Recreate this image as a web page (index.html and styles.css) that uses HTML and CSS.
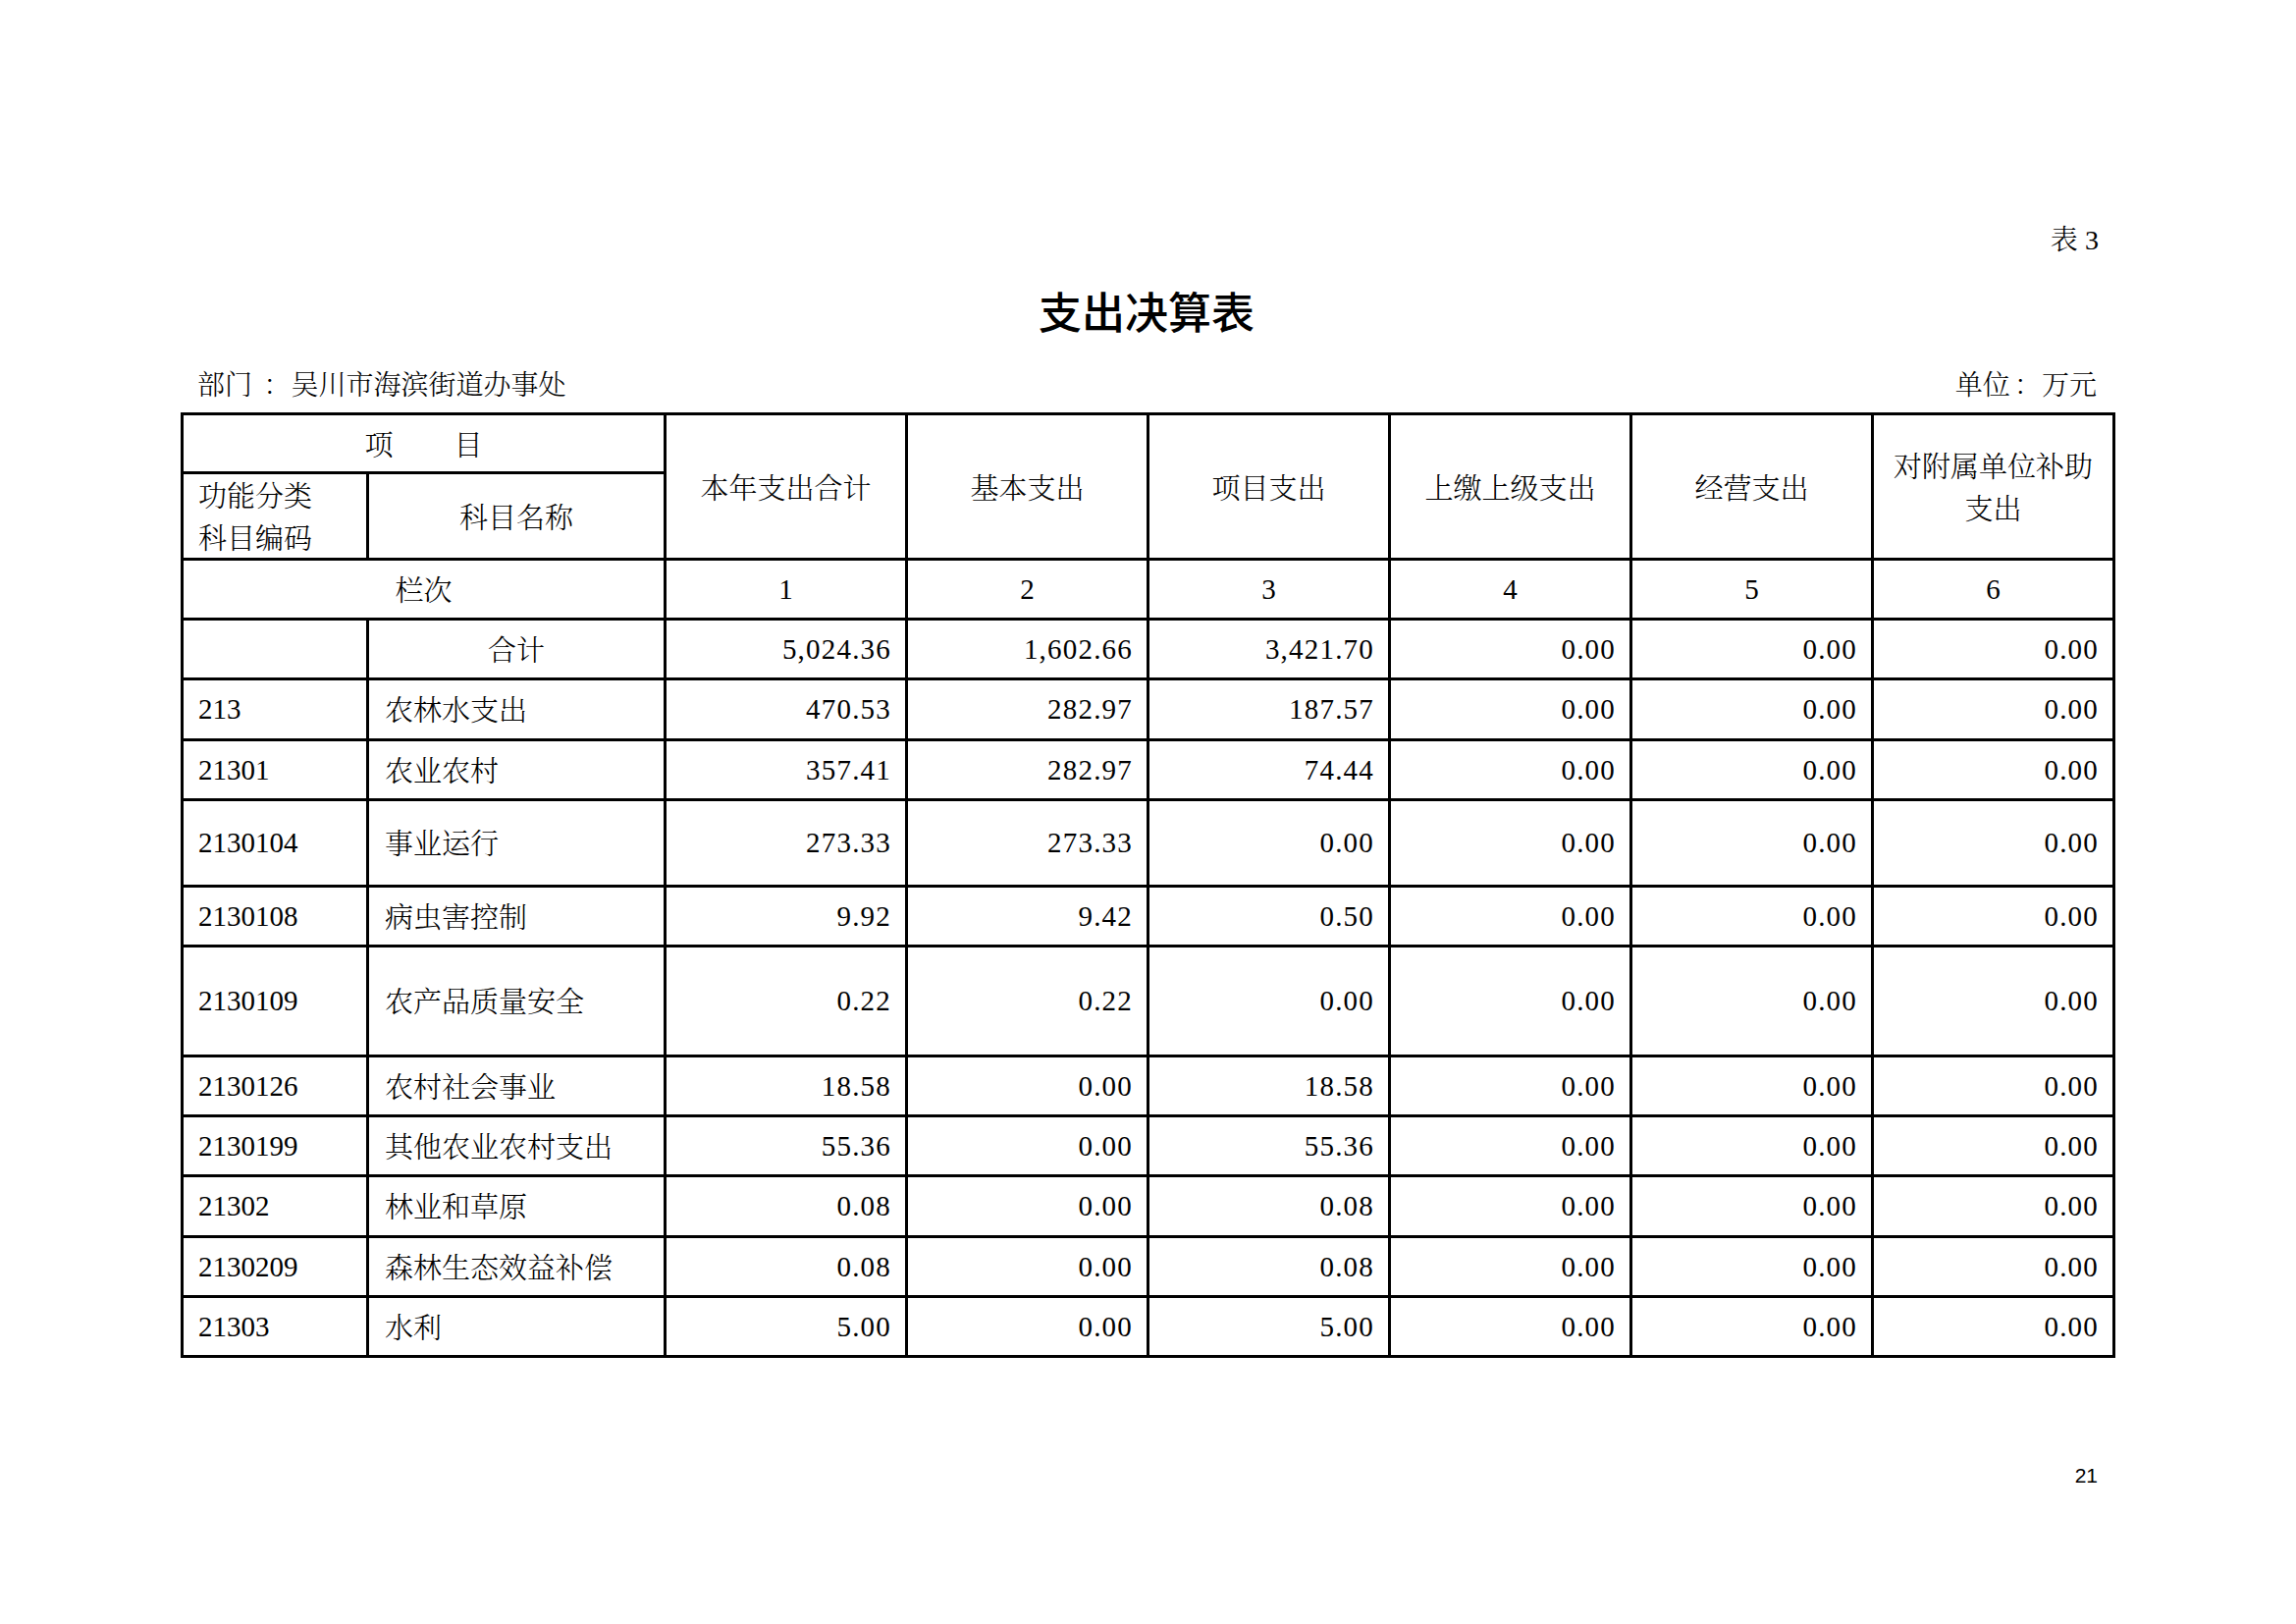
FILE: index.html
```html
<!DOCTYPE html>
<html lang="zh-CN">
<head>
<meta charset="utf-8">
<title>支出决算表</title>
<link rel="stylesheet" href="styles.css">
</head>
<body>
<div class="page">
  <div class="sheet">
    <div class="tag">表 <span class="latin">3</span></div>
    <h1 class="title">支出决算表</h1>
    <div class="meta">
      <span>部门 <span class="colon">：</span>吴川市海滨街道办事处</span>
      <span>单位<span class="colon">：</span>万元</span>
    </div>
    <table class="grid">
      <colgroup>
        <col class="w-code">
        <col class="w-name">
        <col class="w-val">
        <col class="w-val">
        <col class="w-val">
        <col class="w-val">
        <col class="w-val">
        <col class="w-val">
      </colgroup>
      <tr class="h-top">
        <td colspan="2" class="c">项<span class="gap"></span>目</td>
        <td rowspan="2" class="c">本年支出合计</td>
        <td rowspan="2" class="c">基本支出</td>
        <td rowspan="2" class="c">项目支出</td>
        <td rowspan="2" class="c">上缴上级支出</td>
        <td rowspan="2" class="c">经营支出</td>
        <td rowspan="2" class="c two">对附属单位补助<br>支出</td>
      </tr>
      <tr class="h-sub">
        <td class="code two">功能分类<br>科目编码</td>
        <td class="c">科目名称</td>
      </tr>
      <tr class="h-row">
        <td colspan="2" class="c">栏次</td>
        <td class="c latin">1</td>
        <td class="c latin">2</td>
        <td class="c latin">3</td>
        <td class="c latin">4</td>
        <td class="c latin">5</td>
        <td class="c latin">6</td>
      </tr>
      <tr class="h-row">
        <td class="code"></td>
        <td class="c">合计</td>
        <td class="num">5,024.36</td>
        <td class="num">1,602.66</td>
        <td class="num">3,421.70</td>
        <td class="num">0.00</td>
        <td class="num">0.00</td>
        <td class="num">0.00</td>
      </tr>
      <tr class="h-row">
        <td class="code latin">213</td>
        <td class="name">农林水支出</td>
        <td class="num">470.53</td>
        <td class="num">282.97</td>
        <td class="num">187.57</td>
        <td class="num">0.00</td>
        <td class="num">0.00</td>
        <td class="num">0.00</td>
      </tr>
      <tr class="h-row">
        <td class="code latin">21301</td>
        <td class="name">农业农村</td>
        <td class="num">357.41</td>
        <td class="num">282.97</td>
        <td class="num">74.44</td>
        <td class="num">0.00</td>
        <td class="num">0.00</td>
        <td class="num">0.00</td>
      </tr>
      <tr class="h-mid">
        <td class="code latin">2130104</td>
        <td class="name">事业运行</td>
        <td class="num">273.33</td>
        <td class="num">273.33</td>
        <td class="num">0.00</td>
        <td class="num">0.00</td>
        <td class="num">0.00</td>
        <td class="num">0.00</td>
      </tr>
      <tr class="h-row">
        <td class="code latin">2130108</td>
        <td class="name">病虫害控制</td>
        <td class="num">9.92</td>
        <td class="num">9.42</td>
        <td class="num">0.50</td>
        <td class="num">0.00</td>
        <td class="num">0.00</td>
        <td class="num">0.00</td>
      </tr>
      <tr class="h-tall">
        <td class="code latin">2130109</td>
        <td class="name">农产品质量安全</td>
        <td class="num">0.22</td>
        <td class="num">0.22</td>
        <td class="num">0.00</td>
        <td class="num">0.00</td>
        <td class="num">0.00</td>
        <td class="num">0.00</td>
      </tr>
      <tr class="h-row">
        <td class="code latin">2130126</td>
        <td class="name">农村社会事业</td>
        <td class="num">18.58</td>
        <td class="num">0.00</td>
        <td class="num">18.58</td>
        <td class="num">0.00</td>
        <td class="num">0.00</td>
        <td class="num">0.00</td>
      </tr>
      <tr class="h-row">
        <td class="code latin">2130199</td>
        <td class="name">其他农业农村支出</td>
        <td class="num">55.36</td>
        <td class="num">0.00</td>
        <td class="num">55.36</td>
        <td class="num">0.00</td>
        <td class="num">0.00</td>
        <td class="num">0.00</td>
      </tr>
      <tr class="h-row">
        <td class="code latin">21302</td>
        <td class="name">林业和草原</td>
        <td class="num">0.08</td>
        <td class="num">0.00</td>
        <td class="num">0.08</td>
        <td class="num">0.00</td>
        <td class="num">0.00</td>
        <td class="num">0.00</td>
      </tr>
      <tr class="h-row">
        <td class="code latin">2130209</td>
        <td class="name">森林生态效益补偿</td>
        <td class="num">0.08</td>
        <td class="num">0.00</td>
        <td class="num">0.08</td>
        <td class="num">0.00</td>
        <td class="num">0.00</td>
        <td class="num">0.00</td>
      </tr>
      <tr class="h-row">
        <td class="code latin">21303</td>
        <td class="name">水利</td>
        <td class="num">5.00</td>
        <td class="num">0.00</td>
        <td class="num">5.00</td>
        <td class="num">0.00</td>
        <td class="num">0.00</td>
        <td class="num">0.00</td>
      </tr>
    </table>
  </div>
  <div class="pageno">21</div>
</div>
</body>
</html>
```

FILE: styles.css
```css
html, body {
  margin: 0;
  padding: 0;
  background: #ffffff;
}

body {
  color: #000000;
  font-family: "Noto Serif CJK SC", "Noto Sans CJK SC", serif;
  font-weight: 300;
}

.page {
  width: 2339px;
  height: 1654px;
  box-sizing: border-box;
  padding-top: 222px;
}

.sheet {
  width: 1968px;
  margin-left: 184px;
}

.latin {
  font-family: "Liberation Serif", "Noto Serif CJK SC", serif;
}

.colon {
  padding-left: 0.15em;
}

.tag {
  text-align: right;
  padding-right: 14px;
  font-size: 28px;
  line-height: 40px;
  height: 40px;
}

.title {
  margin: 24px 0 0;
  text-align: center;
  font-family: "Noto Sans CJK SC", sans-serif;
  font-size: 44px;
  line-height: 60px;
  font-weight: 500;
}

.meta {
  display: flex;
  justify-content: space-between;
  margin-top: 24px;
  padding: 0 16px 0 17px;
  font-size: 28px;
  line-height: 40px;
}

.grid {
  margin-top: 10px;
  width: 1968px;
  border-collapse: collapse;
  table-layout: fixed;
  font-size: 29px;
}

.w-code { width: 189px; }
.w-name { width: 303px; }
.w-val { width: 246px; }

.grid td {
  border: 3px solid #000000;
  padding: 0 14px;
  vertical-align: middle;
  line-height: 44px;
  white-space: nowrap;
}

.grid td.two {
  line-height: 42.5px;
}

.grid td.c {
  text-align: center;
}

.grid td.code {
  text-align: left;
  padding-left: 15px;
}

.grid td.name {
  text-align: left;
  padding-left: 16px;
}

.grid td.num {
  text-align: right;
  padding-right: 14px;
  font-family: "Liberation Serif", "Noto Serif CJK SC", serif;
  letter-spacing: 1.2px;
}

.gap {
  display: inline-block;
  width: 62px;
}

.h-top { height: 60px; }
.h-sub { height: 88px; }
.h-row { height: 61.2px; }
.h-mid { height: 88px; }
.h-tall { height: 112px; }

.pageno {
  width: 2137px;
  margin-top: 105px;
  text-align: right;
  font-family: "Liberation Sans", "Open Sans", sans-serif;
  font-weight: 400;
  font-size: 21px;
  line-height: 30px;
}
```
